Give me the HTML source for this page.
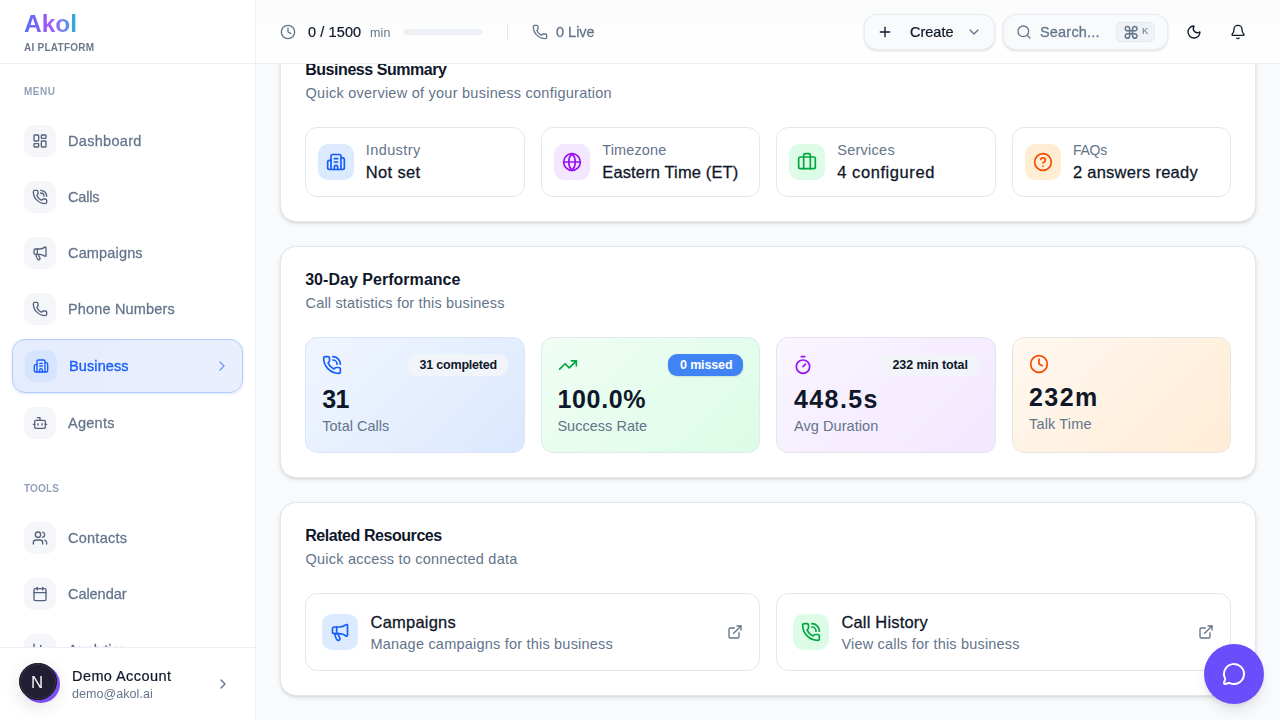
<!DOCTYPE html>
<html lang="en">
<head>
<meta charset="utf-8">
<title>Akol AI Platform - Business</title>
<style>
*{box-sizing:border-box;margin:0;padding:0}
html,body{width:1280px;height:720px;overflow:hidden}
body{font-family:"Liberation Sans",sans-serif;background:#f9fafb;color:#0f172a;position:relative}
.a{position:absolute}
.t{position:absolute;white-space:nowrap;line-height:1}
.g{will-change:transform}
svg.i{position:absolute;fill:none;stroke:currentColor;stroke-linecap:round;stroke-linejoin:round;overflow:visible}
.card{position:absolute;left:280px;width:976px;background:#fff;border:1px solid #e2e8f0;border-radius:16px;box-shadow:0 2px 5px rgba(0,0,0,.08),0 1px 2px rgba(0,0,0,.08)}
.box{position:absolute;border:1px solid #e2e8f0;border-radius:12px;background:#fff}
.tile{position:absolute;width:36px;height:36px;border-radius:10px}
.nt{position:absolute;left:24px;width:32px;height:32px;border-radius:10px;background:#f5f6f9}
.badge{position:absolute;top:354px;height:22px;border-radius:9px;background:#f1f5f9}
.btn{position:absolute;top:14px;height:36px;border:1px solid #e8ecf2;border-radius:13px;background:#f8fafc;box-shadow:0 1px 3px rgba(15,23,42,.09),0 1px 2px rgba(15,23,42,.05)}
</style>
</head>
<body>

<!-- ===== main content ===== -->
<main>
<section aria-label="Business Summary">
<div class="card" style="top:-30px;height:252px"></div>
<span class="t" style="left:305.2px;top:62px;font-size:16px;font-weight:700;letter-spacing:-0.45px;color:#0f172a;">Business Summary</span>
<span class="t" style="left:305.6px;top:86px;font-size:14.5px;letter-spacing:0.25px;color:#64748b;">Quick overview of your business configuration</span>
<div class="box" style="left:305px;top:127px;width:219.5px;height:70px"></div><div class="tile" style="left:318px;top:144px;background:#dbeafe"></div><svg class="i" style="left:326px;top:152px;width:20px;height:20px;color:#155dfc;" viewBox="0 0 24 24" stroke-width="2"><path d="M10 12h4"/><path d="M10 8h4"/><path d="M14 21v-3a2 2 0 0 0-4 0v3"/><path d="M6 10H4a2 2 0 0 0-2 2v7a2 2 0 0 0 2 2h16a2 2 0 0 0 2-2V9a2 2 0 0 0-2-2h-2"/><path d="M6 21V5a2 2 0 0 1 2-2h8a2 2 0 0 1 2 2v16"/></svg>
<span class="t" style="left:365.8px;top:143px;font-size:14.5px;letter-spacing:0.4px;color:#64748b;">Industry</span>
<span class="t" style="left:365.8px;top:164px;font-size:16.5px;letter-spacing:0.33px;color:#0f172a;-webkit-text-stroke:.28px currentColor;">Not set</span>
<div class="box" style="left:540.5px;top:127px;width:219.5px;height:70px"></div><div class="tile" style="left:553.5px;top:144px;background:#f3e8ff"></div><svg class="i" style="left:561.5px;top:152px;width:20px;height:20px;color:#9810fa;" viewBox="0 0 24 24" stroke-width="2"><circle cx="12" cy="12" r="10"/><path d="M12 2a14.5 14.5 0 0 0 0 20 14.5 14.5 0 0 0 0-20"/><path d="M2 12h20"/></svg>
<span class="t" style="left:602.3px;top:143px;font-size:14.5px;letter-spacing:0.12px;color:#64748b;">Timezone</span>
<span class="t" style="left:602.3px;top:164px;font-size:16.5px;letter-spacing:0.13px;color:#0f172a;-webkit-text-stroke:.28px currentColor;">Eastern Time (ET)</span>
<div class="box" style="left:776px;top:127px;width:219.5px;height:70px"></div><div class="tile" style="left:789px;top:144px;background:#dcfce7"></div><svg class="i" style="left:797px;top:152px;width:20px;height:20px;color:#00a63e;" viewBox="0 0 24 24" stroke-width="2"><path d="M16 20V4a2 2 0 0 0-2-2h-4a2 2 0 0 0-2 2v16"/><rect width="20" height="14" x="2" y="6" rx="2"/></svg>
<span class="t" style="left:837.2px;top:143px;font-size:14.5px;letter-spacing:0.27px;color:#64748b;">Services</span>
<span class="t" style="left:837.2px;top:164px;font-size:16.5px;letter-spacing:0.58px;color:#0f172a;-webkit-text-stroke:.28px currentColor;">4 configured</span>
<div class="box" style="left:1011.5px;top:127px;width:219.5px;height:70px"></div><div class="tile" style="left:1024.5px;top:144px;background:#ffedd4"></div><svg class="i" style="left:1032.5px;top:152px;width:20px;height:20px;color:#f54900;" viewBox="0 0 24 24" stroke-width="2"><circle cx="12" cy="12" r="10"/><path d="M9.09 9a3 3 0 0 1 5.83 1c0 2-3 3-3 3"/><path d="M12 17h.01"/></svg>
<span class="t" style="left:1072.9px;top:143px;font-size:14px;letter-spacing:-0.25px;color:#64748b;">FAQs</span>
<span class="t" style="left:1072.9px;top:164px;font-size:16.5px;letter-spacing:0.27px;color:#0f172a;-webkit-text-stroke:.28px currentColor;">2 answers ready</span>
</section>

<section aria-label="30-Day Performance">
<div class="card" style="top:246px;height:232px"></div>
<span class="t" style="left:305.2px;top:272px;font-size:16px;font-weight:700;letter-spacing:0.03px;color:#0f172a;">30-Day Performance</span>
<span class="t" style="left:305.6px;top:296px;font-size:14.5px;letter-spacing:0.17px;color:#64748b;">Call statistics for this business</span>
<div class="box" style="left:305px;top:337px;width:219.5px;height:116px;border-color:#dbe5f7;background:linear-gradient(135deg,#f0f6ff 0%,#e6effe 50%,#dbe8fe 100%)"></div>
<svg class="i" style="left:322px;top:355px;width:20px;height:20px;color:#155dfc;" viewBox="0 0 24 24" stroke-width="2"><path d="M13.832 16.568a1 1 0 0 0 1.213-.303l.355-.465A2 2 0 0 1 17 15h3a2 2 0 0 1 2 2v3a2 2 0 0 1-2 2A18 18 0 0 1 2 4a2 2 0 0 1 2-2h3a2 2 0 0 1 2 2v3a2 2 0 0 1-.8 1.6l-.468.351a1 1 0 0 0-.292 1.233 14 14 0 0 0 6.392 6.384"/><path d="M13 2a9 9 0 0 1 9 9"/><path d="M13 6a5 5 0 0 1 5 5"/></svg>
<div class="badge" style="left:408px;width:100px"></div>
<span class="t" style="left:419.6px;top:359px;font-size:12.5px;font-weight:700;letter-spacing:-0.21px;color:#0f172a;">31 completed</span>
<span class="t" style="left:322.3px;top:387px;font-size:25px;font-weight:700;letter-spacing:-0.8px;color:#0f172a;">31</span>
<span class="t" style="left:322.3px;top:419px;font-size:14.5px;color:#64748b;">Total Calls</span>
<div class="box" style="left:540.5px;top:337px;width:219.5px;height:116px;border-color:#dfeaea;background:linear-gradient(135deg,#f0fdf4 0%,#e6fdee 50%,#dcfce7 100%)"></div>
<svg class="i" style="left:558px;top:355px;width:20px;height:20px;color:#00a63e;" viewBox="0 0 24 24" stroke-width="2"><path d="M16 7h6v6"/><path d="m22 7-8.5 8.5-5-5L2 17"/></svg>
<div class="badge" style="left:668px;width:75px;background:#3f83f5;box-shadow:0 1px 2px rgba(15,23,42,.12)"></div>
<span class="t" style="left:680px;top:359px;font-size:12.5px;font-weight:700;letter-spacing:-0.14px;color:#ffffff;">0 missed</span>
<span class="t" style="left:557.4px;top:387px;font-size:25px;font-weight:700;letter-spacing:0.68px;color:#0f172a;">100.0%</span>
<span class="t" style="left:557.4px;top:419px;font-size:14.5px;letter-spacing:0.03px;color:#64748b;">Success Rate</span>
<div class="box" style="left:776px;top:337px;width:219.5px;height:116px;border-color:#e5e2f2;background:linear-gradient(135deg,#faf5ff 0%,#f6eeff 50%,#f2e8ff 100%)"></div>
<svg class="i" style="left:793px;top:355px;width:20px;height:20px;color:#9810fa;" viewBox="0 0 24 24" stroke-width="2"><line x1="10" x2="14" y1="2" y2="2"/><line x1="12" x2="15" y1="14" y2="11"/><circle cx="12" cy="14" r="8"/></svg>
<div class="badge" style="left:881px;width:98px"></div>
<span class="t" style="left:892.5px;top:359px;font-size:12.5px;font-weight:700;letter-spacing:-0.08px;color:#0f172a;">232 min total</span>
<span class="t" style="left:794.1px;top:387px;font-size:25px;font-weight:700;letter-spacing:1.36px;color:#0f172a;">448.5s</span>
<span class="t" style="left:794.1px;top:419px;font-size:14.5px;letter-spacing:0.05px;color:#64748b;">Avg Duration</span>
<div class="box" style="left:1011.5px;top:337px;width:219.5px;height:116px;border-color:#ebe5e2;background:linear-gradient(135deg,#fff8f0 0%,#fff2e2 50%,#ffecd6 100%)"></div>
<svg class="i" style="left:1029px;top:354px;width:20px;height:20px;color:#f54900;" viewBox="0 0 24 24" stroke-width="2"><circle cx="12" cy="12" r="10"/><path d="M12 6v6l4 2"/></svg>
<span class="t" style="left:1029px;top:385px;font-size:25px;font-weight:700;letter-spacing:1.43px;color:#0f172a;">232m</span>
<span class="t" style="left:1029px;top:417px;font-size:14.5px;letter-spacing:0.16px;color:#64748b;">Talk Time</span>
</section>

<section aria-label="Related Resources">
<div class="card" style="top:502px;height:194px"></div>
<span class="t" style="left:305.2px;top:528px;font-size:16px;font-weight:700;letter-spacing:-0.44px;color:#0f172a;">Related Resources</span>
<span class="t" style="left:305.6px;top:552px;font-size:14.5px;letter-spacing:0.21px;color:#64748b;">Quick access to connected data</span>
<div class="box" style="left:305px;top:593px;width:455px;height:78px"></div>
<div class="tile" style="left:322px;top:614px;background:#dbeafe"></div>
<svg class="i" style="left:330px;top:622px;width:20px;height:20px;color:#155dfc;" viewBox="0 0 24 24" stroke-width="2"><path d="M11 6a13 13 0 0 0 8.4-2.8A1 1 0 0 1 21 4v12a1 1 0 0 1-1.6.8A13 13 0 0 0 11 14H5a2 2 0 0 1-2-2V8a2 2 0 0 1 2-2z"/><path d="M6 14a12 12 0 0 0 2.4 7.2 2 2 0 0 0 3.2-2.4A8 8 0 0 1 10 14"/><path d="M8 6v8"/></svg>
<span class="t" style="left:370.5px;top:614px;font-size:16.5px;letter-spacing:0.22px;color:#0f172a;-webkit-text-stroke:.28px currentColor;">Campaigns</span>
<span class="t" style="left:370.5px;top:637px;font-size:14.5px;letter-spacing:0.21px;color:#64748b;">Manage campaigns for this business</span>
<svg class="i" style="left:727px;top:624px;width:16px;height:16px;color:#64748b;" viewBox="0 0 24 24" stroke-width="2"><path d="M15 3h6v6"/><path d="M10 14 21 3"/><path d="M18 13v6a2 2 0 0 1-2 2H5a2 2 0 0 1-2-2V8a2 2 0 0 1 2-2h6"/></svg>
<div class="box" style="left:776px;top:593px;width:455px;height:78px"></div>
<div class="tile" style="left:793px;top:614px;background:#dcfce7"></div>
<svg class="i" style="left:801px;top:622px;width:20px;height:20px;color:#00a63e;" viewBox="0 0 24 24" stroke-width="2"><path d="M13.832 16.568a1 1 0 0 0 1.213-.303l.355-.465A2 2 0 0 1 17 15h3a2 2 0 0 1 2 2v3a2 2 0 0 1-2 2A18 18 0 0 1 2 4a2 2 0 0 1 2-2h3a2 2 0 0 1 2 2v3a2 2 0 0 1-.8 1.6l-.468.351a1 1 0 0 0-.292 1.233 14 14 0 0 0 6.392 6.384"/><path d="M13 2a9 9 0 0 1 9 9"/><path d="M13 6a5 5 0 0 1 5 5"/></svg>
<span class="t" style="left:841.4px;top:614px;font-size:16.5px;letter-spacing:0.18px;color:#0f172a;-webkit-text-stroke:.28px currentColor;">Call History</span>
<span class="t" style="left:841.4px;top:637px;font-size:14.5px;letter-spacing:0.19px;color:#64748b;">View calls for this business</span>
<svg class="i" style="left:1198px;top:624px;width:16px;height:16px;color:#64748b;" viewBox="0 0 24 24" stroke-width="2"><path d="M15 3h6v6"/><path d="M10 14 21 3"/><path d="M18 13v6a2 2 0 0 1-2 2H5a2 2 0 0 1-2-2V8a2 2 0 0 1 2-2h6"/></svg>
</section>
</main>

<!-- ===== top bar ===== -->
<header>
<div class="a" style="left:256px;top:0;width:1024px;height:64px;background:linear-gradient(180deg,#fafbfc 0%,#fefefe 60%,#fefefe 100%);border-bottom:1px solid #eceff5"></div>
<svg class="i" style="left:280px;top:24px;width:16px;height:16px;color:#64748b;" viewBox="0 0 24 24" stroke-width="2"><circle cx="12" cy="12" r="10"/><path d="M12 6v6l4 2"/></svg>
<span class="t g" style="left:308.2px;top:25px;font-size:14.5px;letter-spacing:0.11px;color:#0f172a;-webkit-text-stroke:.22px currentColor;">0 / 1500</span>
<span class="t g" style="left:369.9px;top:27px;font-size:12.5px;letter-spacing:0.21px;color:#64748b;">min</span>
<div class="a" style="left:403px;top:29px;width:80px;height:6px;border-radius:3px;background:#eef1f5"></div>
<div class="a" style="left:507px;top:24px;width:1px;height:16px;background:#e2e8f0"></div>
<svg class="i" style="left:532px;top:24px;width:16px;height:16px;color:#64748b;" viewBox="0 0 24 24" stroke-width="2"><path d="M13.832 16.568a1 1 0 0 0 1.213-.303l.355-.465A2 2 0 0 1 17 15h3a2 2 0 0 1 2 2v3a2 2 0 0 1-2 2A18 18 0 0 1 2 4a2 2 0 0 1 2-2h3a2 2 0 0 1 2 2v3a2 2 0 0 1-.8 1.6l-.468.351a1 1 0 0 0-.292 1.233 14 14 0 0 0 6.392 6.384"/></svg>
<span class="t g" style="left:556.4px;top:25px;font-size:14.5px;letter-spacing:-0.01px;color:#64748b;-webkit-text-stroke:.26px currentColor;">0 Live</span>
<div class="btn" style="left:864px;width:131px"></div>
<svg class="i" style="left:877px;top:24px;width:16px;height:16px;color:#0f172a;" viewBox="0 0 24 24" stroke-width="2"><path d="M5 12h14"/><path d="M12 5v14"/></svg>
<span class="t g" style="left:910.1px;top:25px;font-size:14.5px;color:#0f172a;-webkit-text-stroke:.22px currentColor;">Create</span>
<svg class="i" style="left:966px;top:24px;width:16px;height:16px;color:#64748b;" viewBox="0 0 24 24" stroke-width="2"><path d="m6 9 6 6 6-6"/></svg>
<div class="btn" style="left:1003px;width:165px"></div>
<svg class="i" style="left:1016px;top:24px;width:16px;height:16px;color:#64748b;" viewBox="0 0 24 24" stroke-width="2"><path d="m21 21-4.34-4.34"/><circle cx="11" cy="11" r="8"/></svg>
<span class="t g" style="left:1040.4px;top:25px;font-size:14.5px;letter-spacing:0.19px;color:#64748b;-webkit-text-stroke:.26px currentColor;">Search...</span>
<div class="a" style="left:1116px;top:22px;width:39px;height:20px;border-radius:5px;background:#eff2f6;border:1px solid #e6eaf0"></div>
<span class="t g" style="left:1122.5px;top:24.5px;font-size:17.5px;font-family:'DejaVu Sans','Liberation Sans',sans-serif;font-weight:700;color:#64748b">&#8984;</span>
<span class="t g" style="left:1142.4px;top:26px;font-size:9.5px;letter-spacing:-0.8px;color:#64748b;">K</span>
<svg class="i" style="left:1186px;top:24px;width:16px;height:16px;color:#0f172a;" viewBox="0 0 24 24" stroke-width="2"><path d="M20.985 12.486a9 9 0 1 1-9.473-9.472c.405-.022.617.46.402.803a6 6 0 0 0 8.268 8.268c.344-.215.825-.004.803.401"/></svg>
<svg class="i" style="left:1230px;top:24px;width:16px;height:16px;color:#0f172a;" viewBox="0 0 24 24" stroke-width="2"><path d="M10.268 21a2 2 0 0 0 3.464 0"/><path d="M3.262 15.326A1 1 0 0 0 4 17h16a1 1 0 0 0 .74-1.673C19.41 13.956 18 12.499 18 8A6 6 0 0 0 6 8c0 4.499-1.411 5.956-2.738 7.326"/></svg>
</header>

<!-- ===== sidebar ===== -->
<aside>
<div class="a" style="left:0;top:0;width:256px;height:720px;background:#fff;border-right:1px solid #eceff5"></div>
<nav>
<span class="t g" style="left:24px;top:87px;font-size:10px;font-weight:700;letter-spacing:0.5px;color:#94a3b8;">MENU</span>
<div class="nt" style="top:125px"></div><svg class="i" style="left:32px;top:133px;width:16px;height:16px;color:#55627a;" viewBox="0 0 24 24" stroke-width="2"><rect width="7" height="9" x="3" y="3" rx="1"/><rect width="7" height="5" x="14" y="3" rx="1"/><rect width="7" height="9" x="14" y="12" rx="1"/><rect width="7" height="5" x="3" y="16" rx="1"/></svg><div class="nt" style="top:181px"></div><svg class="i" style="left:32px;top:189px;width:16px;height:16px;color:#55627a;" viewBox="0 0 24 24" stroke-width="2"><path d="M13.832 16.568a1 1 0 0 0 1.213-.303l.355-.465A2 2 0 0 1 17 15h3a2 2 0 0 1 2 2v3a2 2 0 0 1-2 2A18 18 0 0 1 2 4a2 2 0 0 1 2-2h3a2 2 0 0 1 2 2v3a2 2 0 0 1-.8 1.6l-.468.351a1 1 0 0 0-.292 1.233 14 14 0 0 0 6.392 6.384"/><path d="M13 2a9 9 0 0 1 9 9"/><path d="M13 6a5 5 0 0 1 5 5"/></svg><div class="nt" style="top:237px"></div><svg class="i" style="left:32px;top:245px;width:16px;height:16px;color:#55627a;" viewBox="0 0 24 24" stroke-width="2"><path d="M11 6a13 13 0 0 0 8.4-2.8A1 1 0 0 1 21 4v12a1 1 0 0 1-1.6.8A13 13 0 0 0 11 14H5a2 2 0 0 1-2-2V8a2 2 0 0 1 2-2z"/><path d="M6 14a12 12 0 0 0 2.4 7.2 2 2 0 0 0 3.2-2.4A8 8 0 0 1 10 14"/><path d="M8 6v8"/></svg><div class="nt" style="top:293px"></div><svg class="i" style="left:32px;top:301px;width:16px;height:16px;color:#55627a;" viewBox="0 0 24 24" stroke-width="2"><path d="M13.832 16.568a1 1 0 0 0 1.213-.303l.355-.465A2 2 0 0 1 17 15h3a2 2 0 0 1 2 2v3a2 2 0 0 1-2 2A18 18 0 0 1 2 4a2 2 0 0 1 2-2h3a2 2 0 0 1 2 2v3a2 2 0 0 1-.8 1.6l-.468.351a1 1 0 0 0-.292 1.233 14 14 0 0 0 6.392 6.384"/></svg>
<div class="a" style="left:12px;top:339px;width:231px;height:54px;border:1px solid #b4cbf9;border-radius:13px;background:linear-gradient(90deg,#e5ecfe,#eaeffe);box-shadow:0 1px 3px rgba(59,130,246,.18)"></div>
<div class="nt" style="left:25px;top:350px;background:#d7e4fd"></div>
<svg class="i" style="left:33px;top:358px;width:16px;height:16px;color:#155dfc;" viewBox="0 0 24 24" stroke-width="2"><path d="M10 12h4"/><path d="M10 8h4"/><path d="M14 21v-3a2 2 0 0 0-4 0v3"/><path d="M6 10H4a2 2 0 0 0-2 2v7a2 2 0 0 0 2 2h16a2 2 0 0 0 2-2V9a2 2 0 0 0-2-2h-2"/><path d="M6 21V5a2 2 0 0 1 2-2h8a2 2 0 0 1 2 2v16"/></svg>
<svg class="i" style="left:214px;top:358px;width:16px;height:16px;color:#6d9bf6;" viewBox="0 0 24 24" stroke-width="2"><path d="m9 18 6-6-6-6"/></svg>
<div class="nt" style="top:407px"></div><svg class="i" style="left:32px;top:415px;width:16px;height:16px;color:#55627a;" viewBox="0 0 24 24" stroke-width="2"><path d="M12 8V4H8"/><rect width="16" height="12" x="4" y="8" rx="2"/><path d="M2 14h2"/><path d="M20 14h2"/><path d="M15 13v2"/><path d="M9 13v2"/></svg>
<span class="t g" style="left:67.8px;top:134px;font-size:14.5px;letter-spacing:0.31px;color:#64748b;-webkit-text-stroke:.26px currentColor;">Dashboard</span>
<span class="t g" style="left:67.8px;top:190px;font-size:14.5px;letter-spacing:-0.2px;color:#64748b;-webkit-text-stroke:.26px currentColor;">Calls</span>
<span class="t g" style="left:67.8px;top:246px;font-size:14.5px;letter-spacing:0.16px;color:#64748b;-webkit-text-stroke:.26px currentColor;">Campaigns</span>
<span class="t g" style="left:67.8px;top:302px;font-size:14.5px;letter-spacing:0.17px;color:#64748b;-webkit-text-stroke:.26px currentColor;">Phone Numbers</span>
<span class="t g" style="left:68.8px;top:359px;font-size:14.5px;letter-spacing:0.11px;color:#1a60fb;-webkit-text-stroke:.35px currentColor;">Business</span>
<span class="t g" style="left:67.8px;top:416px;font-size:14.5px;letter-spacing:0.26px;color:#64748b;-webkit-text-stroke:.26px currentColor;">Agents</span>
<span class="t g" style="left:24px;top:484px;font-size:10px;font-weight:700;letter-spacing:0.19px;color:#94a3b8;">TOOLS</span>
<div class="nt" style="top:522px"></div><svg class="i" style="left:32px;top:530px;width:16px;height:16px;color:#55627a;" viewBox="0 0 24 24" stroke-width="2"><path d="M16 21v-2a4 4 0 0 0-4-4H6a4 4 0 0 0-4 4v2"/><path d="M16 3.128a4 4 0 0 1 0 7.744"/><path d="M22 21v-2a4 4 0 0 0-3-3.87"/><circle cx="9" cy="7" r="4"/></svg><div class="nt" style="top:578px"></div><svg class="i" style="left:32px;top:586px;width:16px;height:16px;color:#55627a;" viewBox="0 0 24 24" stroke-width="2"><path d="M8 2v4"/><path d="M16 2v4"/><rect width="18" height="18" x="3" y="4" rx="2"/><path d="M3 10h18"/></svg><div class="nt" style="top:634px"></div><svg class="i" style="left:32px;top:642px;width:16px;height:16px;color:#55627a;" viewBox="0 0 24 24" stroke-width="2"><path d="M3 3v16a2 2 0 0 0 2 2h16"/><path d="M18 17V9"/><path d="M13 17V5"/><path d="M8 17v-3"/></svg>
<span class="t g" style="left:67.8px;top:531px;font-size:14.5px;letter-spacing:0.25px;color:#64748b;-webkit-text-stroke:.26px currentColor;">Contacts</span>
<span class="t g" style="left:67.8px;top:587px;font-size:14.5px;letter-spacing:-0.05px;color:#64748b;-webkit-text-stroke:.26px currentColor;">Calendar</span>
<span class="t g" style="left:67.8px;top:643px;font-size:14.5px;letter-spacing:-0.02px;color:#64748b;-webkit-text-stroke:.26px currentColor;">Analytics</span>
</nav>
<!-- sidebar header -->
<div class="a" style="left:0;top:0;width:255px;height:64px;background:#fff;border-bottom:1px solid #eceff5"></div>
<span class="t g" style="left:23.7px;top:12px;font-size:24.5px;font-weight:700;background:linear-gradient(90deg,#4f6ef7 0%,#a855f7 50%,#7c83f5 72%,#22b0d8 100%);-webkit-background-clip:text;background-clip:text;color:transparent;">Akol</span>
<span class="t g" style="left:24.2px;top:43px;font-size:10px;font-weight:700;letter-spacing:0.26px;color:#6c7a90;">AI PLATFORM</span>
<!-- sidebar footer -->
<div class="a" style="left:0;top:647px;width:255px;height:73px;background:#fff;border-top:1px solid #eceff5"></div>
<div class="a" style="left:22px;top:665px;width:38px;height:38px;border-radius:50%;background:linear-gradient(135deg,#6366f1,#7c4dff 55%,#8b5cf6)"></div>
<div class="a" style="left:19px;top:662.5px;width:37.5px;height:37.5px;border-radius:50%;background:#211e34;border:1px solid #14121d;box-shadow:inset 0 0 0 1px rgba(255,255,255,.10),0 6px 18px rgba(15,23,42,.13)"></div>
<span class="t g" style="left:31px;top:675.4px;font-size:16.8px;color:#f4f4f8">N</span>
<span class="t g" style="left:72px;top:669px;font-size:14.5px;letter-spacing:0.42px;color:#0f172a;-webkit-text-stroke:.22px currentColor;">Demo Account</span>
<span class="t g" style="left:72px;top:688px;font-size:12.5px;letter-spacing:0.06px;color:#64748b;">demo@akol.ai</span>
<svg class="i" style="left:215px;top:676px;width:16px;height:16px;color:#64748b;" viewBox="0 0 24 24" stroke-width="2"><path d="m9 18 6-6-6-6"/></svg>
</aside>

<!-- ===== floating chat button ===== -->
<div class="a" style="left:1204px;top:644px;width:60px;height:60px;border-radius:50%;background:#6b4efb;box-shadow:0 8px 14px -3px rgba(15,23,42,.12),0 3px 6px -3px rgba(15,23,42,.10)"></div>
<svg class="i" style="left:1222px;top:662px;width:24px;height:24px;color:#fff;" viewBox="0 0 24 24" stroke-width="2"><path d="M2.992 16.342a2 2 0 0 1 .094 1.167l-1.065 3.29a1 1 0 0 0 1.236 1.168l3.413-.998a2 2 0 0 1 1.099.092 10 10 0 1 0-4.777-4.719"/></svg>

</body>
</html>
